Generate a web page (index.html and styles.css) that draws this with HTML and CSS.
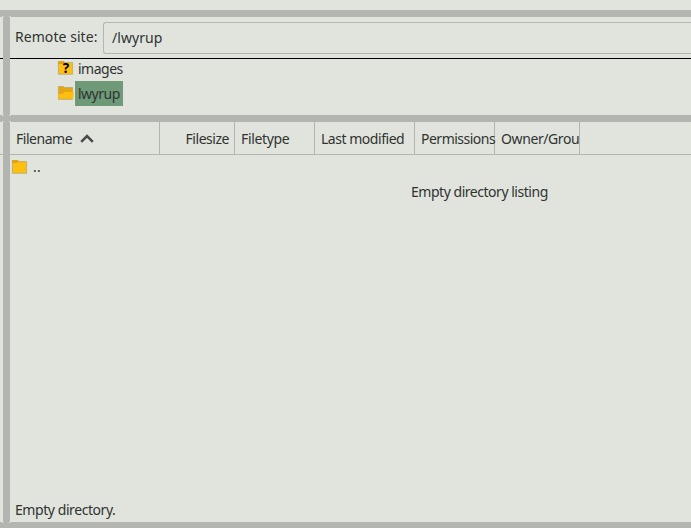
FILE: index.html
```html
<!DOCTYPE html>
<html lang="en">
<head>
<meta charset="utf-8">
<title>Remote site</title>
<link rel="stylesheet" href="styles.css">
</head>
<body>
<div class="window">
  <div class="top-gap"></div>
  <div class="sash sash-top"></div>
  <div class="panes">
    <div class="local">
      <div class="local-address"></div>
      <div class="local-tree"></div>
      <div class="sash"></div>
      <div class="local-header"></div>
    </div>
    <div class="divider"><i class="joint joint-top"></i><i class="joint joint-cross"></i><i class="joint joint-cross-low"></i><i class="joint joint-bottom"></i></div>
    <main class="remote">
      <div class="address">
        <span class="address-label">Remote site:</span>
        <div class="address-input"><span>/lwyrup</span></div>
      </div>
      <div class="tree">
        <div class="tree-row">
          <svg class="icon" width="16" height="16" viewBox="0 0 16 16"><path d="M.4 1.5h5l1.2 1h8v11.8H.4z" fill="#fdbf11" stroke="#b9a873" stroke-width=".8"/><path d="M0 1.2h6l1 1.1-2.2 1.8H0z" fill="#e5a10a"/><text x="8" y="12.6" text-anchor="middle" class="unknown">?</text></svg>
          <span class="tree-name">images</span>
        </div>
        <div class="tree-row">
          <svg class="icon" width="16" height="16" viewBox="0 0 16 16"><path d="M.4 1.5h5l1.2 1h8v11.8H.4z" fill="#e6a60f" stroke="#b9a873" stroke-width=".8"/><path d="M0 9h4.6l2-2H16l-.9 6.8H.7z" fill="#fdbf11"/></svg>
          <span class="tree-name selected">lwyrup</span>
        </div>
      </div>
      <div class="sash"></div>
      <div class="header">
        <div class="col"><span class="filename">Filename</span><svg class="sort" width="14" height="9" viewBox="0 0 14 9"><path d="M1.2 7.8 7 2l5.8 5.8" fill="none" stroke="#484b49" stroke-width="2.5"/></svg></div>
        <div class="col right"><span>Filesize</span></div>
        <div class="col type"><span>Filetype</span></div>
        <div class="col"><span>Last modified</span></div>
        <div class="col tight"><span>Permissions</span></div>
        <div class="col owner"><span>Owner/Grou</span></div>
      </div>
      <div class="list">
        <div class="file-row">
          <svg class="icon" width="16" height="16" viewBox="0 0 16 16"><path d="M.4 1.5h5l1.2 1h8v11.8H.4z" fill="#fdbf11" stroke="#b9a873" stroke-width=".8"/><path d="M0 1.2h6l1 1.1-2.2 1.8H0z" fill="#e5a10a"/></svg>
          <span>..</span>
        </div>
        <div class="empty">Empty directory listing</div>
      </div>
      <div class="status">Empty directory.</div>
    </main>
  </div>
  <div class="sash sash-bottom"></div>
</div>
</body>
</html>
```

FILE: styles.css
```css
* { box-sizing: border-box; }
body {
  margin: 0;
  background: #e1e4dd;
  color: #303331;
  font: 14px/18px "Noto Sans", sans-serif;
  letter-spacing: -.47px;
  overflow: hidden;
}
.window { display: flex; flex-direction: column; height: 528px; }
.top-gap { height: 10px; }
.sash { height: 7px; background: #b3b6b0; flex: none; }
.sash-bottom { height: 6px; }
.panes { flex: 1; display: grid; grid-template-columns: 3px 7px 1fr; min-height: 0; }
.local-address { height: 42px; border-bottom: 1px solid #000; }
.local-tree { height: 56px; }
.local-header { height: 33px; border-bottom: 1px solid #b3b6b0; }
.divider { background: #b3b6b0; position: relative; }
.joint { position: absolute; left: -1px; width: 9px; height: 1px; border: solid #e1e4dd; border-width: 0 2px; opacity: .7; }
.joint-top { top: -1px; }
.joint-cross { top: 98px; }
.joint-cross-low { top: 104px; }
.joint-bottom { bottom: -1px; }
.remote { display: flex; flex-direction: column; min-width: 0; overflow: hidden; }
.address {
  height: 42px;
  flex: none;
  display: flex;
  align-items: flex-start;
  padding: 5px 0 0 5px;
  border-bottom: 1px solid #000;
  letter-spacing: .06px;
}
.address-label { width: 88px; padding-top: 6px; white-space: nowrap; }
.address-input {
  flex: 1;
  height: 32px;
  padding: 6px 8px;
  border: 1px solid #b3b6b0;
  border-right: 0;
  border-radius: 3px 0 0 3px;
}
.tree { height: 56px; padding-left: 48px; flex: none; overflow: hidden; }
.tree-row { display: flex; height: 25px; }
.tree-row:first-child { height: 22px; }
.tree-row .icon { margin-top: 1px; }
.tree-row + .tree-row .icon { margin-top: 4px; }
.icon { flex: none; display: block; overflow: visible; }
.unknown { font: bold 13.5px "Noto Sans", sans-serif; letter-spacing: 0; fill: #000; }
.tree-name { margin-left: 1px; padding: 1px 3px; height: 25px; letter-spacing: -.5px; }
.selected { background: #6f9a78; padding-top: 4px; }
.header {
  height: 33px;
  flex: none;
  display: grid;
  grid-template-columns: 150px 75px 80px 100px 80px 85px;
  border-bottom: 1px solid #b3b6b0;
}
.col {
  display: flex;
  align-items: center;
  padding: 1px 0 0 6px;
  border-right: 1px solid #b3b6b0;
  white-space: nowrap;
}
.right { justify-content: flex-end; padding-right: 5px; }
.type { letter-spacing: -.35px; }
.tight { letter-spacing: -.5px; }
.owner { letter-spacing: -.4px; }
.sort { margin-left: 8px; }
.list { flex: 1; }
.file-row { display: flex; height: 28px; padding: 4px 0 0 2px; }
.file-row span { margin: -1px 0 0 5px; letter-spacing: .3px; }
.empty { padding-left: 401px; white-space: nowrap; }
.status { height: 21px; padding-left: 5px; flex: none; letter-spacing: -.43px; }
```
